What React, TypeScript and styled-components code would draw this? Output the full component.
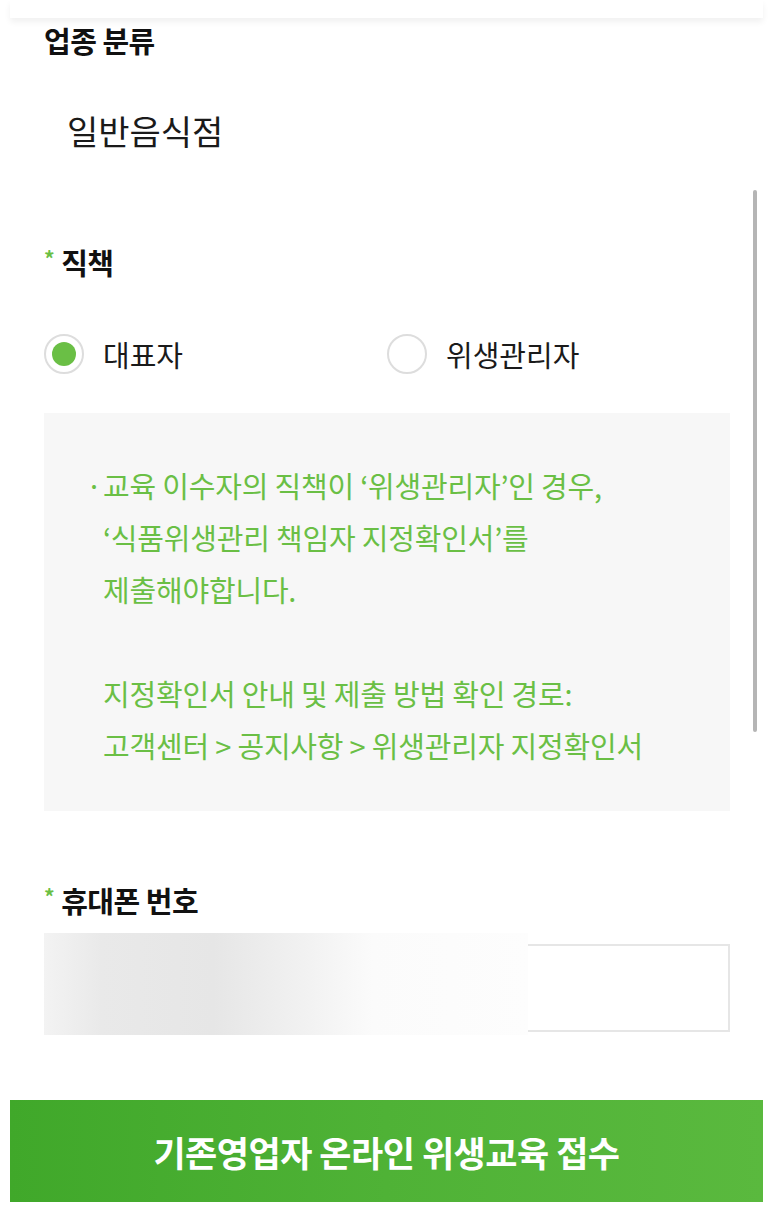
import React from 'react';
import styled, { createGlobalStyle } from 'styled-components';

const GlobalStyle = createGlobalStyle`
  html, body {
    margin: 0;
    padding: 0;
    background: #ffffff;
  }
  body {
    font-family: "Noto Sans CJK KR", "Noto Sans", sans-serif;
    color: #111111;
  }
  * {
    box-sizing: border-box;
  }
`;

const Page = styled.div`
  position: relative;
  width: 773px;
  min-height: 1211px;
  background: #ffffff;
  overflow: hidden;
`;

const TopBar = styled.div`
  height: 18px;
  margin: 0 10px;
  background: #ffffff;
  box-shadow: 0 4px 6px rgba(0, 0, 0, 0.06);
`;

const Content = styled.div`
  padding: 0 43px 0 44px;
`;

const Label = styled.div<{ $top: number }>`
  margin-top: ${(p) => p.$top}px;
  font-size: 29px;
  font-weight: 700;
  line-height: 36px;
  letter-spacing: -0.5px;
  color: #111111;
  display: flex;
  align-items: center;
`;

const Star = styled.span`
  color: #6abf45;
  font-size: 21px;
  font-weight: 700;
  margin-right: 7px;
  align-self: flex-start;
  line-height: 28px;
`;

const Value = styled.div`
  margin-top: 53px;
  padding-left: 23px;
  font-size: 34px;
  line-height: 40px;
  color: #1a1a1a;
`;

const RadioRow = styled.div`
  margin-top: 53px;
  display: grid;
  grid-template-columns: 1fr 1fr;
  height: 40px;
`;

const RadioOption = styled.label`
  display: flex;
  align-items: center;
  gap: 19px;
  font-size: 29px;
  color: #1a1a1a;
`;

const RadioCircle = styled.span<{ $checked?: boolean }>`
  width: 40px;
  height: 40px;
  border-radius: 50%;
  border: 2px solid #dddddd;
  display: flex;
  align-items: center;
  justify-content: center;
  flex-shrink: 0;
  &::after {
    content: '';
    width: 24px;
    height: 24px;
    border-radius: 50%;
    background: ${(p) => (p.$checked ? '#6abf45' : 'transparent')};
  }
`;

const NoticeBox = styled.div`
  margin-top: 40px;
  background: #f7f7f7;
  padding: 46px 20px 40px 59px;
  color: #6abf45;
  font-size: 29px;
  line-height: 52px;
  letter-spacing: -0.2px;
`;

const NoticeLine = styled.p<{ $bullet?: boolean }>`
  position: relative;
  margin: 0;
  min-height: 52px;
  white-space: nowrap;
  &::before {
    content: ${(p) => (p.$bullet ? "'·'" : "''")};
    position: absolute;
    left: -17px;
    top: 0;
  }
`;

const InputWrap = styled.div`
  position: relative;
  margin-top: 26px;
`;

const PhoneInput = styled.input`
  display: block;
  width: 100%;
  height: 88px;
  border: 2px solid #e6e6e6;
  background: #ffffff;
  font-size: 26px;
  padding: 0 20px;
  outline: none;
`;

const BlurPatch = styled.div`
  position: absolute;
  left: 0;
  top: -11px;
  width: 484px;
  height: 102px;
  background: linear-gradient(
    90deg,
    #f3f3f3 0%,
    #e9e9e9 12%,
    #e6e6e6 35%,
    #f2f2f2 55%,
    #fbfbfb 68%,
    #fdfdfd 100%
  );
`;

const SubmitButton = styled.button`
  display: block;
  width: 753px;
  height: 102px;
  margin: 68px 10px 0;
  border: none;
  background: linear-gradient(90deg, #40a82a 0%, #4fb236 50%, #5ab93e 100%);
  color: #ffffff;
  font-family: "Noto Sans CJK KR", "Noto Sans", sans-serif;
  font-size: 35px;
  font-weight: 700;
  letter-spacing: -0.5px;
`;

const ScrollThumb = styled.div`
  position: absolute;
  left: 753px;
  top: 190px;
  width: 4px;
  height: 542px;
  border-radius: 2px;
  background: #b5b5b5;
`;

export default function App() {
  return (
    <>
      <GlobalStyle />
      <Page>
        <TopBar />
        <Content>
          <Label $top={4}>업종 분류</Label>
          <Value>일반음식점</Value>

          <Label $top={93}>
            <Star>*</Star>직책
          </Label>
          <RadioRow>
            <RadioOption>
              <RadioCircle $checked />
              대표자
            </RadioOption>
            <RadioOption>
              <RadioCircle />
              위생관리자
            </RadioOption>
          </RadioRow>

          <NoticeBox>
            <NoticeLine $bullet>교육 이수자의 직책이 ‘위생관리자’인 경우,</NoticeLine>
            <NoticeLine>‘식품위생관리 책임자 지정확인서’를</NoticeLine>
            <NoticeLine>제출해야합니다.</NoticeLine>
            <NoticeLine />
            <NoticeLine>지정확인서 안내 및 제출 방법 확인 경로:</NoticeLine>
            <NoticeLine>고객센터 &gt; 공지사항 &gt; 위생관리자 지정확인서</NoticeLine>
          </NoticeBox>

          <Label $top={71}>
            <Star>*</Star>휴대폰 번호
          </Label>
          <InputWrap>
            <PhoneInput type="tel" />
            <BlurPatch />
          </InputWrap>
        </Content>
        <SubmitButton>기존영업자 온라인 위생교육 접수</SubmitButton>
        <ScrollThumb />
      </Page>
    </>
  );
}
